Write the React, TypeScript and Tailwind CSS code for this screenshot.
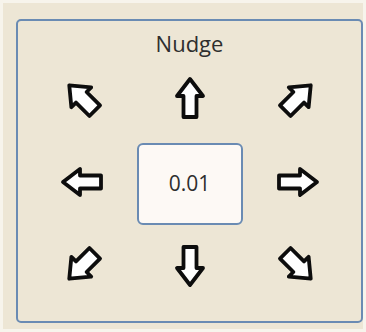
import { ReactNode } from 'react';

// arrow drawn pointing up, rotated for the other directions
const Arrow = ({ className, diag }: { className: string; diag?: boolean }) => (
  <svg
    width={diag ? 44 : 44}
    height={diag ? 44 : 44}
    viewBox="0 0 44 44"
    className={className}
  >
    <path
      d={
        diag
          ? 'M22 4 L36 21 L29.5 21 L29.5 40 L14.5 40 L14.5 21 L8 21 Z'
          : 'M22 3 L35 20 L28.5 20 L28.5 41 L15.5 41 L15.5 20 L9 20 Z'
      }
      fill="#ffffff"
      stroke="#0d0d0d"
      strokeWidth={3.8}
      strokeLinejoin="round"
    />
  </svg>
);

const Cell = ({ children }: { children: ReactNode }) => (
  <div className="flex items-center justify-center">{children}</div>
);

const App = () => {
  return (
    <div className="w-[366px] h-[332px] bg-[#f7f4ec] p-[3px] font-['Open_Sans',sans-serif] text-[#2e2e2e]">
      <div className="h-full bg-[#ede6d5] pl-[13px] pt-[16px]">
        <div className="w-[347px] h-[304px] border-2 border-[#6a8bb3] rounded-[5px] flex flex-col">
          <div className="h-[35px] pt-[9px] text-center text-[22px] leading-[26px]">Nudge</div>
          <div className="grid grid-cols-[108px_108px_108px] grid-rows-[84px_84px_84px] justify-center">
            <Cell>
              <Arrow diag className="-rotate-45" />
            </Cell>
            <Cell>
              <Arrow className="rotate-0" />
            </Cell>
            <Cell>
              <Arrow diag className="rotate-45" />
            </Cell>

            <Cell>
              <Arrow className="-rotate-90" />
            </Cell>
            <Cell>
              <div className="w-[106px] h-[82px] mt-[4px] border-2 border-[#6a8bb3] rounded-[6px] bg-[#fdf9f5] flex items-center justify-center text-[21px]">
                0.01
              </div>
            </Cell>
            <Cell>
              <Arrow className="rotate-90" />
            </Cell>

            <Cell>
              <Arrow diag className="-rotate-135" />
            </Cell>
            <Cell>
              <Arrow className="rotate-180" />
            </Cell>
            <Cell>
              <Arrow diag className="rotate-135" />
            </Cell>
          </div>
        </div>
      </div>
    </div>
  );
};

export default App;
